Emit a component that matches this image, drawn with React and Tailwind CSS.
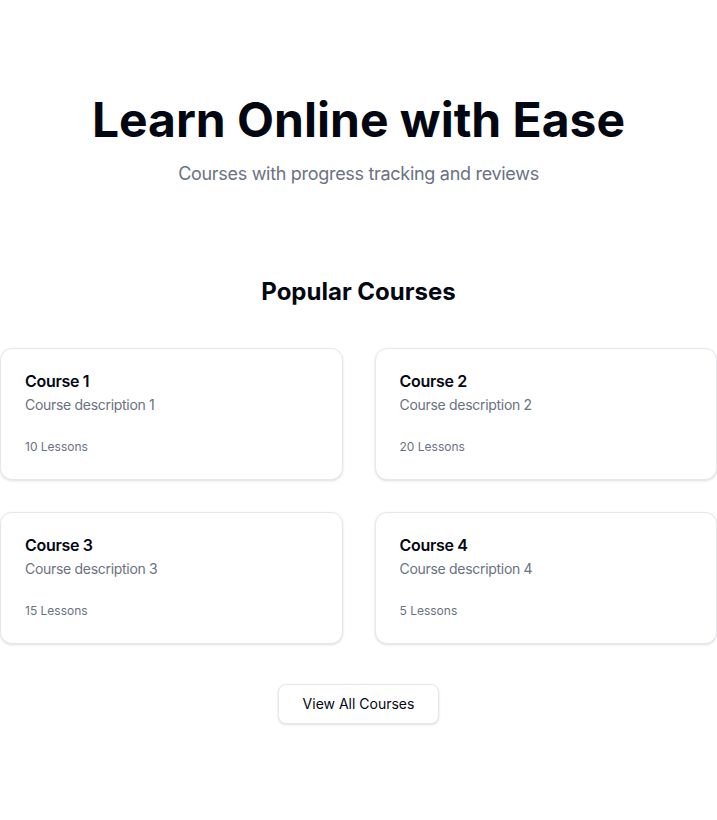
import React from "react";

const courses = [
  { title: "Course 1", desc: "Course description 1", lessons: "10 Lessons" },
  { title: "Course 2", desc: "Course description 2", lessons: "20 Lessons" },
  { title: "Course 3", desc: "Course description 3", lessons: "15 Lessons" },
  { title: "Course 4", desc: "Course description 4", lessons: "5 Lessons" },
];

export default function App() {
  return (
    <div className="min-h-[820px] w-full bg-white text-[#030712] font-['Inter',sans-serif]">
      <section className="flex flex-col items-center pt-24 text-center">
        <h1 className="text-5xl font-bold leading-none">Learn Online with Ease</h1>
        <p className="mt-4 text-lg tracking-[-0.3px] text-gray-500">Courses with progress tracking and reviews</p>
      </section>
      <section className="mt-[88px] flex flex-col items-center">
        <h2 className="text-2xl font-bold">Popular Courses</h2>
        <div className="mt-10 grid w-full grid-cols-2 gap-8">
          {courses.map((c) => (
            <div key={c.title} className="rounded-xl border border-gray-200 bg-white p-6 shadow-sm">
              <h3 className="text-base font-semibold leading-none tracking-[-0.3px]">{c.title}</h3>
              <p className="mt-1.5 text-sm tracking-[-0.3px] text-gray-500">{c.desc}</p>
              <p className="mt-6 text-xs text-gray-500">{c.lessons}</p>
            </div>
          ))}
        </div>
        <button className="mt-10 h-10 rounded-lg border border-gray-200 bg-white px-6 text-sm font-normal shadow-sm">
          View All Courses
        </button>
      </section>
    </div>
  );
}
